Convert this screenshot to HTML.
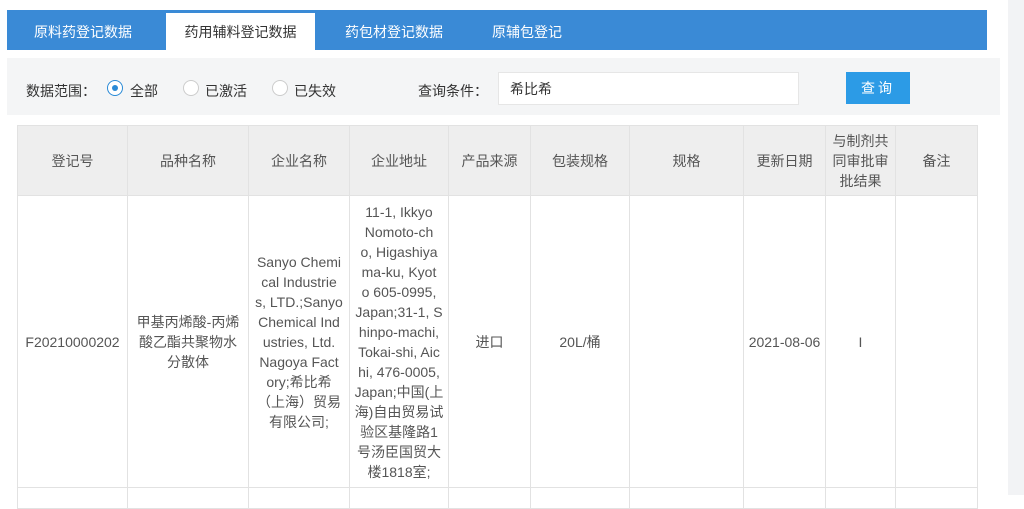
<!DOCTYPE html>
<html><head><meta charset="utf-8"><style>
body{margin:0;width:1024px;height:495px;background:#fff;font-family:"Liberation Sans","Noto Sans CJK SC",sans-serif;color:#444;position:relative;overflow:hidden;font-size:14px}
.tabs{position:absolute;left:7px;top:10px;width:980px;height:40px;background:#3a8ad6}
.tab{position:absolute;top:0;height:40px;line-height:44px;color:#fff;font-size:14px}
.tab.on{background:#fff;color:#333;top:3px;height:37px;line-height:38px;text-align:center}
.filter{position:absolute;left:7px;top:58px;width:993px;height:57px;background:#f4f5f6}
.lab{position:absolute;top:81px;font-size:14px;color:#333}
.radio{position:absolute;top:80px;width:16px;height:16px;border:1px solid #ccc;border-radius:50%;background:#fff;box-sizing:border-box}
.radio.on{border-color:#2a8ad6}
.radio.on:after{content:"";position:absolute;left:4px;top:4px;width:6px;height:6px;border-radius:50%;background:#2a8ad6}
.inp{position:absolute;left:498px;top:72px;width:301px;height:33px;background:#fff;border:1px solid #e6e6e6;box-sizing:border-box;padding-left:11px;line-height:33px;color:#333}
.btn{position:absolute;left:846px;top:72px;width:64px;height:32px;background:#2c9be6;color:#fff;text-align:center;line-height:32px;letter-spacing:3px}
table{position:absolute;left:17px;top:125px;border-collapse:collapse;width:960px;table-layout:fixed}
td{border:1px solid #e2e2e2;text-align:center;vertical-align:middle;padding:0;color:#555;line-height:20px;font-size:14px}
tr.h td{background:#eeeeee;height:69px}
tr.r td{height:291px}
tr.e td{height:20px}
.sb{position:absolute;left:1008px;top:0;width:16px;height:495px;background:#f2f3f5}
</style></head><body>
<div class="tabs">
<div class="tab" style="left:27px">原料药登记数据</div>
<div class="tab on" style="left:159px;width:149px">药用辅料登记数据</div>
<div class="tab" style="left:338px">药包材登记数据</div>
<div class="tab" style="left:485px">原辅包登记</div>
</div>
<div class="filter"></div>
<div class="lab" style="left:26px">数据范围：</div>
<div class="radio on" style="left:107px"></div><div class="lab" style="left:130px">全部</div>
<div class="radio" style="left:183px"></div><div class="lab" style="left:205px">已激活</div>
<div class="radio" style="left:272px"></div><div class="lab" style="left:294px">已失效</div>
<div class="lab" style="left:418px">查询条件：</div>
<div class="inp">希比希</div>
<div class="btn">查询</div>
<table>
<colgroup><col style="width:110px"><col style="width:121px"><col style="width:101px"><col style="width:99px"><col style="width:82px"><col style="width:99px"><col style="width:114px"><col style="width:82px"><col style="width:70px"><col style="width:82px"></colgroup>
<tr class="h"><td>登记号</td><td>品种名称</td><td>企业名称</td><td>企业地址</td><td>产品来源</td><td>包装规格</td><td>规格</td><td>更新日期</td><td>与制剂共<br>同审批审<br>批结果</td><td>备注</td></tr>
<tr class="r"><td>F20210000202</td><td>甲基丙烯酸-丙烯<br>酸乙酯共聚物水<br>分散体</td><td>Sanyo Chemi<br>cal Industrie<br>s, LTD.;Sanyo<br>Chemical Ind<br>ustries, Ltd.<br>Nagoya Fact<br>ory;希比希<br>（上海）贸易<br>有限公司;</td><td>11-1, Ikkyo<br>Nomoto-ch<br>o, Higashiya<br>ma-ku, Kyot<br>o 605-0995,<br>Japan;31-1, S<br>hinpo-machi,<br>Tokai-shi, Aic<br>hi, 476-0005,<br>Japan;中国(上<br>海)自由贸易试<br>验区基隆路1<br>号汤臣国贸大<br>楼1818室;</td><td>进口</td><td>20L/桶</td><td></td><td>2021-08-06</td><td>I</td><td></td></tr>
<tr class="e"><td></td><td></td><td></td><td></td><td></td><td></td><td></td><td></td><td></td><td></td></tr>
</table>
<div class="sb"></div>
</body></html>
